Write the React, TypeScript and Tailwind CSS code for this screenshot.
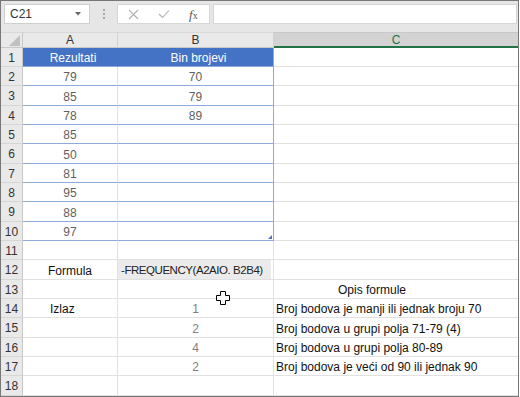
import React from "react";

const heights = [19, 19, 20, 19, 19, 20, 19, 19, 20, 19, 19, 20, 19, 19, 20, 19, 19, 20];

type Cell = { text?: string; cls?: string };

function rowData(r: number): { a: Cell; b: Cell; c: Cell } {
  const gray = "text-[#5f5f5f] justify-center";
  const gray2 = "text-[#7f7f7f] justify-center";
  switch (r) {
    case 1:
      return { a: { text: "Rezultati", cls: "text-white justify-center pl-[6px]" }, b: { text: "Bin brojevi", cls: "text-white justify-center pl-[6px]" }, c: {} };
    case 2:
      return { a: { text: "79", cls: gray }, b: { text: "70", cls: gray }, c: {} };
    case 3:
      return { a: { text: "85", cls: gray }, b: { text: "79", cls: gray }, c: {} };
    case 4:
      return { a: { text: "78", cls: gray }, b: { text: "89", cls: gray }, c: {} };
    case 5:
      return { a: { text: "85", cls: gray }, b: {}, c: {} };
    case 6:
      return { a: { text: "50", cls: gray }, b: {}, c: {} };
    case 7:
      return { a: { text: "81", cls: gray }, b: {}, c: {} };
    case 8:
      return { a: { text: "95", cls: gray }, b: {}, c: {} };
    case 9:
      return { a: { text: "88", cls: gray }, b: {}, c: {} };
    case 10:
      return { a: { text: "97", cls: gray }, b: {}, c: {} };
    case 12:
      return { a: { text: "Formula", cls: "text-[#111] justify-center" }, b: {}, c: {} };
    case 13:
      return { a: {}, b: {}, c: { text: "Opis formule", cls: "text-[#111] pl-[64px]" } };
    case 14:
      return { a: { text: "Izlaz", cls: "text-[#111] pl-[27px]" }, b: { text: "1", cls: gray2 }, c: { text: "Broj bodova je manji ili jednak broju 70", cls: "text-[#111] pl-[2px]" } };
    case 15:
      return { a: {}, b: { text: "2", cls: gray2 }, c: { text: "Broj bodova u grupi polja 71-79 (4)", cls: "text-[#111] pl-[2px]" } };
    case 16:
      return { a: {}, b: { text: "4", cls: gray2 }, c: { text: "Broj bodova u grupi polja 80-89", cls: "text-[#111] pl-[2px]" } };
    case 17:
      return { a: {}, b: { text: "2", cls: gray2 }, c: { text: "Broj bodova je veći od 90 ili jednak 90", cls: "text-[#111] pl-[2px]" } };
    default:
      return { a: {}, b: {}, c: {} };
  }
}

function Row({ r, h }: { r: number; h: number }) {
  const d = rowData(r);
  const inTable = r >= 1 && r <= 10;
  const header = r === 1;
  const hb = inTable ? "border-b-[#8eaadb]" : "border-b-[#e1e1e1]";
  const bg = header ? "bg-[#4472c4]" : "bg-white";
  return (
    <div className="flex" style={{ height: h }}>
      <div className="w-[22px] shrink-0 bg-[#e9e9e9] border-r border-r-[#c8c8c8] border-b border-b-[#d6d6d6] flex items-center justify-center text-[12px] text-[#333] pt-[1px]">
        {r}
      </div>
      <div className={`w-[95px] shrink-0 ${bg} border-r ${header ? "border-r-[#4472c4]" : "border-r-[#e1e1e1]"} border-b ${hb} flex items-center pt-[2px] text-[12px] whitespace-nowrap ${d.a.cls ?? ""}`}>
        {d.a.text}
      </div>
      <div className={`w-[156px] shrink-0 ${bg} relative border-r ${inTable ? "border-r-[#8eaadb]" : "border-r-[#e1e1e1]"} border-b ${hb} flex items-center pt-[2px] text-[12px] whitespace-nowrap ${d.b.cls ?? ""}`}>
        {r === 12 ? (
          <div className="absolute left-0 top-0 right-[2px] bottom-0 bg-[#ebebeb] flex items-center pt-[2px] pl-[3px] text-[#222] text-[11.5px] tracking-[-0.45px] whitespace-nowrap">
            -FREQUENCY(A2AIO. B2B4)
          </div>
        ) : (
          d.b.text
        )}
        {r === 10 && (
          <svg className="absolute right-[1px] bottom-[1px]" width="4" height="4" viewBox="0 0 4 4">
            <polygon points="4,0 4,4 0,4" fill="#4472c4" />
          </svg>
        )}
      </div>
      <div className={`flex-1 bg-white border-b border-b-[#e1e1e1] flex items-center pt-[2px] text-[12px] whitespace-nowrap ${d.c.cls ?? ""}`}>
        {d.c.text}
      </div>
    </div>
  );
}

export default function App() {
  return (
    <div
      className="relative w-[519px] h-[397px] border border-[#777] bg-[#e6e6e6] overflow-hidden"
      style={{ fontFamily: '"Liberation Sans", Arial, sans-serif' }}
    >
      {/* toolbar */}
      <div className="h-[31px] flex items-start pt-[3px] pl-[3px] pr-[1px]">
        <div className="w-[86px] h-[20px] bg-white border border-[#cfcfcf] flex items-center justify-between pl-[5px] pr-[8px] text-[12px] text-[#333]">
          <span>C21</span>
          <svg width="6" height="4" viewBox="0 0 6 4">
            <polygon points="0,0 6,0 3,3.5" fill="#666" />
          </svg>
        </div>
        <div className="w-[27px] h-[20px] flex flex-col items-center justify-center gap-[2px]">
          <span className="w-[2px] h-[2px] bg-[#a6a6a6]" />
          <span className="w-[2px] h-[2px] bg-[#a6a6a6]" />
          <span className="w-[2px] h-[2px] bg-[#a6a6a6]" />
        </div>
        <div className="w-[93px] h-[20px] bg-white border border-[#d6d6d6] flex items-center pl-[10px]">
          <svg width="11" height="11" viewBox="0 0 11 11">
            <path d="M1 1 L10 10 M10 1 L1 10" stroke="#b0b0b0" strokeWidth="1.1" />
          </svg>
          <svg className="ml-[19px]" width="12" height="10" viewBox="0 0 12 10">
            <path d="M1 5 L4.5 8.5 L11 1.5" stroke="#b0b0b0" strokeWidth="1.1" fill="none" />
          </svg>
          <span
            className="ml-[19px] text-[13px] italic text-[#555] leading-none"
            style={{ fontFamily: '"Liberation Serif", "Times New Roman", serif' }}
          >
            f<span className="text-[10px] not-italic">x</span>
          </span>
        </div>
        <div className="ml-[3px] flex-1 h-[20px] bg-white border border-[#d6d6d6]" />
      </div>
      {/* column header row */}
      <div className="flex h-[16px]">
        <div className="w-[22px] shrink-0 bg-[#e9e9e9] border-r border-r-[#c8c8c8] border-b border-b-[#c8c8c8] border-t border-t-[#d9d9d9] relative">
          <svg className="absolute right-[2px] bottom-[1px]" width="11" height="11" viewBox="0 0 11 11">
            <polygon points="11,0 11,11 0,11" fill="#c0c0c0" />
          </svg>
        </div>
        <div className="w-[95px] shrink-0 bg-[#e9e9e9] border-r border-r-[#d2d2d2] border-b border-b-[#c8c8c8] border-t border-t-[#d9d9d9] flex items-center justify-center text-[12px] text-[#333]">
          A
        </div>
        <div className="w-[156px] shrink-0 bg-[#e9e9e9] border-r border-r-[#d2d2d2] border-b border-b-[#c8c8c8] border-t border-t-[#d9d9d9] flex items-center justify-center text-[12px] text-[#333]">
          B
        </div>
        <div className="flex-1 bg-[#d3d3d3] border-b-2 border-b-[#217346] border-t border-t-[#c8c8c8] flex items-center justify-center text-[12px] text-[#217346]">
          C
        </div>
      </div>
      {heights.map((h, i) => (
        <Row key={i} r={i + 1} h={h} />
      ))}
      {/* cursor */}
      <svg className="absolute left-[215px] top-[290px]" width="14" height="14" viewBox="0 0 14 14">
        <path
          d="M4.5 0.5 H9.5 V4.5 H13.5 V9.5 H9.5 V13.5 H4.5 V9.5 H0.5 V4.5 H4.5 Z"
          fill="#fff"
          stroke="#000"
          strokeWidth="1"
        />
      </svg>
    </div>
  );
}
